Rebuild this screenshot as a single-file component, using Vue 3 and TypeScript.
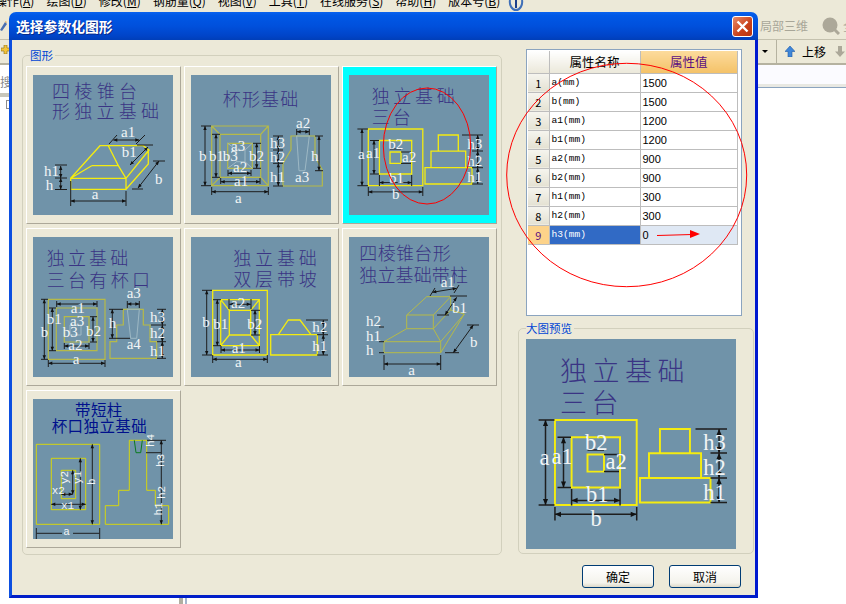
<script setup lang="ts">
type Label = [number, number, string, number?]
type Title = [number, number, number, string]
type Stroke = [string, number, string]
type Dim = [number, number, number, number]

interface Diagram {
  id: string
  titleColor?: string
  small?: boolean
  titles: Title[]
  strokes: Stroke[]
  ticks: string
  dims: Dim[]
  labels: Label[]
}

const YELLOW = '#f4ec10'
const OLIVE = '#b6ba48'
const FAINT = '#9db8c4'

const stepped: Diagram = {
  id: 'stepped',
  titles: [[22.7, 28, 83, '独立基础'], [22.7, 49, 39, '三台']],
  strokes: [
    [YELLOW, 1.3, 'M19.3 54H73.8V110.7H19.3Z M30.4 65.5H62.7V99H30.4Z M41 77H52V88.4H41Z'],
    [YELLOW, 1.3, 'M89.3 76V60H109.3V76 M82 92.5V76.2H116.7V92.5 M76 92.7H123V109H76Z'],
  ],
  ticks: 'M8.4 54H19 M8.4 110.7H19 M21 65.5H30 M21 99H30 M19.3 112V121 M73.8 112V121 M30.4 100V111 M62.7 100V111 M41 74H52 M52 77H62 M52 88.4H62 M113 60H134 M123 76H134 M123 92.7H134 M123 109H134',
  dims: [[13, 54, 13, 110.7], [25, 65.5, 25, 99], [19.3, 116.9, 73.8, 116.9], [30.4, 107.6, 62.7, 107.6], [128.7, 60, 128.7, 76], [128.7, 76, 128.7, 92.7], [128.7, 92.7, 128.7, 109]],
  labels: [[9, 84, 'a'], [17, 83.3, 'a1'], [39.3, 74, 'b2'], [53, 86.7, 'a2'], [40, 108.4, 'b1'], [43, 124.4, 'b'], [118.2, 74, 'h3'], [118.2, 90.7, 'h2'], [118.2, 107.3, 'h1']],
}

const tiles: Diagram[] = [
  {
    id: 'frustum',
    titles: [[19, 23, 85, '四棱锥台'], [19, 43, 107, '形独立基础']],
    strokes: [[YELLOW, 1.3, 'M37.7 103.3H93V114.3H37.7Z M37.7 103.3L67 70.7H110.3L116 75L93 103.3 M93 114.3L115.3 89V75 M58.7 90.7H85.3L75.3 70.7 M37.7 103.3L58.7 90.7 M85.3 90.7L93 103.3']],
    ticks: 'M37.7 106V131 M93 116V131 M76 69L84 60 M103 69L112 60 M104 70H120 M120 86H132 M99 114H110 M22 90H34 M22 103H34 M22 114.5H34',
    dims: [[37.7, 126, 93, 126], [80.3, 65, 106.3, 65], [115, 72, 97, 90], [126, 86, 105, 113], [27.7, 91, 27.7, 103], [27.7, 103, 27.7, 114.5]],
    labels: [[88, 62, 'a1'], [88.7, 81.7, 'b1'], [122, 109, 'b'], [58.7, 124, 'a'], [11, 100.7, 'h1'], [12.7, 115, 'h']],
  },
  {
    id: 'cup',
    titles: [[31.7, 31, 75.6, '杯形基础']],
    strokes: [
      [OLIVE, 1.2, 'M20.7 51H77.3V110.7H20.7Z M29 59.3H69.7V102.3H29Z M36.7 68.3H61.3V93.3H36.7Z M20.7 51L29 59.3 M77.3 51L69.7 59.3 M20.7 110.7L29 102.3 M77.3 110.7L69.7 102.3'],
      [OLIVE, 1.2, 'M100 61H124V81.7L131.3 95V111H92V88.3L100 74.7Z'],
      [FAINT, 1, 'M45.7 75H54V86.7H45.7Z M36.7 68.3L45.7 75 M61.3 68.3L54 75 M36.7 93.3L45.7 86.7 M61.3 93.3L54 86.7 M105.7 61H118.3L114 95.7H108Z'],
    ],
    ticks: 'M10 51H20 M10 110.7H20 M21 59.3H29 M21 102.3H29 M62 68.3H70 M62 93.3H70 M20.7 112V120 M77.3 112V120 M29.7 103V109 M69 103V109 M37 95V101 M60 95V101 M105.7 54V60 M118.3 54V60 M82 61H92 M82 75H92 M82 88.3H92 M82 111H92 M124 61H132 M124 95.7H132',
    dims: [[14, 51, 14, 110.7], [25, 59.3, 25, 102.3], [65.7, 68.3, 65.7, 93.3], [20.7, 116.7, 77.3, 116.7], [29.7, 106.7, 69, 106.7], [37, 98.3, 60, 98.3], [105.7, 56.7, 118.3, 56.7], [128, 61, 128, 95.7], [87.3, 61, 87.3, 75], [87.3, 75, 87.3, 88.3], [87.3, 88.3, 87.3, 111]],
    labels: [[8, 85.7, 'b'], [18, 85.7, 'b1'], [31.7, 85.7, 'b3'], [58, 85.7, 'b2'], [40, 75.7, 'a3'], [42, 97.3, 'a2'], [43, 110.7, 'a1'], [44, 128, 'a'], [105, 53.3, 'a2'], [79, 72.7, 'h3'], [79, 86.7, 'h2'], [79, 106.7, 'h1'], [120, 86, 'h'], [104, 107, 'a3']],
  },
  stepped,
  {
    id: 'steppedCup',
    titles: [[13.7, 27.5, 81.6, '独立基础'], [13.7, 49.7, 103.3, '三台有杯口']],
    strokes: [
      [OLIVE, 1.2, 'M15.3 62.3H72V122.3H15.3Z M23.3 71H64V113.7H23.3Z M31.3 79.7H56V105H31.3Z'],
      [OLIVE, 1.2, 'M90.3 72.3H110.3V88H117V104.7H123.7V121.3H77V104.7H83.7V88H90.3Z'],
      [FAINT, 1, 'M37 88H48V98H37Z M94.3 72.3H106.3L103.7 101.3H97.7Z'],
    ],
    ticks: 'M8 62.3H15 M8 122.3H15 M16 71H23 M16 113.7H23 M57 79.7H64 M57 105H64 M15.3 123V130 M72 123V130 M23.7 64V70 M64 64V70 M31.3 106V112 M56 106V112 M94.3 64V71 M106.3 64V71 M76 72.3H90 M76 101.3H97 M124 72.3H133 M118 88H133 M124 104.7H133 M124 121.3H133',
    dims: [[11.3, 62.3, 11.3, 122.3], [15.3, 126.3, 72, 126.3], [23.7, 67, 64, 67], [19.3, 71, 19.3, 113.7], [60, 79.7, 60, 105], [31.3, 109, 56, 109], [94.3, 67, 106.3, 67], [79.3, 72.3, 79.3, 101.3], [129.3, 72.3, 129.3, 88], [129.3, 88, 129.3, 104.7], [129.3, 104.7, 129.3, 121.3]],
    labels: [[7.7, 99.7, 'b'], [13.7, 87, 'b1'], [37.7, 75.7, 'a1'], [37, 88.7, 'a3'], [29.7, 100.3, 'b3'], [53, 99, 'b2'], [35.3, 113, 'a2'], [39.7, 127.3, 'a'], [93.7, 61, 'a3'], [75.7, 91.3, 'h'], [93.7, 112.3, 'a4'], [117, 85, 'h3'], [117, 101.3, 'h2'], [117, 118.7, 'h1']],
  },
  {
    id: 'doubleSlope',
    titles: [[42.3, 27.5, 83.4, '独立基础'], [42.3, 49, 83.4, '双层带坡']],
    strokes: [
      [YELLOW, 1.3, 'M21.7 53.3H76.3V118H21.7Z M29.7 62.7H68.3V108.7H29.7Z M38.3 73.3H59.7V98H38.3Z M29.7 62.7L38.3 73.3 M68.3 62.7L59.7 73.3 M29.7 108.7L38.3 98 M68.3 108.7L59.7 98'],
      [YELLOW, 1.3, 'M79.7 97.7H126.3V118H79.7Z M87.3 97.7L97.3 83H109L120 97.7'],
    ],
    ticks: 'M11 53.3H21 M11 118H21 M22 62.7H30 M22 108.7H30 M60 73.3H69 M60 98H69 M21.7 118V126 M76.3 118V126 M30 109V116 M68.5 109V116 M38 62V72 M60 62V72 M115 83H137 M126 97.7H137 M126 118H137',
    dims: [[15.7, 53.3, 15.7, 118], [26.3, 62.7, 26.3, 108.7], [64, 73.3, 64, 98], [38.3, 67.3, 59.7, 67.3], [30, 113, 68.5, 113], [21.7, 122.3, 76.3, 122.3], [132.3, 83, 132.3, 97.7], [132.3, 97.7, 132.3, 118]],
    labels: [[11.3, 90.3, 'b'], [22.3, 92, 'b1'], [40, 70.7, 'a2'], [56.3, 91.7, 'b2'], [40.7, 115.7, 'a1'], [44, 129.7, 'a'], [121.3, 94.7, 'h2'], [121.3, 114, 'h1']],
  },
  {
    id: 'frustumColumn',
    titles: [[10.3, 23, 91.4, '四棱锥台形'], [10.3, 44.7, 108.7, '独立基础带柱']],
    strokes: [[OLIVE, 1, 'M35 104.7H91.7V115.7H35Z M57.7 78H84.3V91.7H57.7Z M57.7 78L77.7 59.7H101.7L84.3 78 M101.7 59.7V73L84.3 91.7 M35 104.7L57.7 91.7 M84.3 91.7L91.7 104.7 M101.7 73L115.3 77L91.7 115.7 M115.3 77L91.7 104.7']],
    ticks: 'M35 118V133 M91.7 118V133 M81 59L86 51 M105 56L110 48 M101 59H118 M88 78H100 M118 88H130 M96 115.7H110 M30 90H35 M30 104.7H35 M30 115.7H35',
    dims: [[35, 127, 91.7, 127], [83.3, 55.3, 107.7, 51.3], [107.7, 60.3, 96, 78], [124.3, 88, 104.3, 115.7]],
    labels: [[91.7, 50.3, 'a1'], [103, 75.7, 'b1'], [121, 110.3, 'b'], [59.3, 138, 'a'], [17, 89, 'h2'], [17, 104, 'h1'], [17, 118.3, 'h']],
  },
  {
    id: 'shortColumn',
    titleColor: '#00108c',
    small: true,
    titles: [[42, 16.7, 47.3, '带短柱'], [18.7, 32.7, 95, '杯口独立基础']],
    strokes: [
      ['#d6d60e', 1, 'M3.3 45.3H66.7V125.3H3.3Z M18.3 59.3H52.7V110.7H18.3Z M28.3 71.3H42.7V99.7H28.3Z'],
      ['#d6d60e', 1, 'M96.3 41.3H113.7V91.3H122.3V106.7H135.7V125.3H72.3V106.7H85.7V91.3H96.3Z'],
      ['#0a7a20', 1, 'M101.3 41.3L103 53.7H107.7L109.3 41.3'],
    ],
    ticks: 'M3.3 129V140 M66.7 129V140 M114 41.3H133 M113 53.7H128 M3.5 134.3H29 M40 134.3H66.5',
    dims: [[59.3, 45.3, 59.3, 125.3], [47.3, 59.3, 47.3, 110.7], [39.7, 71.3, 39.7, 95.3], [18.3, 105.3, 52.7, 105.3], [28.3, 95.3, 39.7, 95.3], [128.3, 41.3, 128.3, 125.3]],
    labels: [[28, 110, 'x1'], [18.7, 94.7, 'x2'], [30.3, 135.7, 'a'], [62, 86, 'b', -90], [48, 85, 'y1', -90], [34.7, 85, 'y2', -90], [121, 48, 'h4', -90], [131, 68, 'h3', -90], [131.7, 100, 'h2', -90], [129.3, 116.5, 'h1', -90]],
  },
]

const menus: [string, string][] = [
  ['操作', 'A'], ['绘图', 'D'], ['修改', 'M'], ['钢筋量', 'Q'], ['视图', 'V'],
  ['工具', 'T'], ['在线服务', 'S'], ['帮助', 'H'], ['版本号', 'B'],
]

const rows = [
  ['a(mm)', '1500'], ['b(mm)', '1500'], ['a1(mm)', '1200'], ['b1(mm)', '1200'], ['a2(mm)', '900'],
  ['b2(mm)', '900'], ['h1(mm)', '300'], ['h2(mm)', '300'], ['h3(mm)', '0'],
]

const dimLine = (d: Dim) => `M${d[0]} ${d[1]}L${d[2]} ${d[3]}`

// filled arrow heads on both ends of a dimension line
const dimHeads = (d: Dim) => {
  const len = Math.hypot(d[2] - d[0], d[3] - d[1]) || 1
  const ux = (d[2] - d[0]) / len
  const uy = (d[3] - d[1]) / len
  const size = Math.min(4, len / 2.5)
  const head = (x: number, y: number, dir: number) => {
    const bx = x + ux * size * dir
    const by = y + uy * size * dir
    return `M${x} ${y}L${bx - uy * 1.7} ${by + ux * 1.7}L${bx + uy * 1.7} ${by - ux * 1.7}Z`
  }
  return head(d[0], d[1], 1) + head(d[2], d[3], -1)
}

const labelTransform = (l: Label) => (l[3] ? `rotate(${l[3]} ${l[0]} ${l[1]})` : undefined)
</script>

<template>
  <div class="desk">
    <!-- main application behind the dialog -->
    <div class="menubar">
      <div class="menubar-inner">
        <span v-for="m in menus" :key="m[0]">{{ m[0] }}(<u>{{ m[1] }}</u>)</span>
        <svg class="menu-icon" width="16" height="11" viewBox="0 0 16 11">
          <path d="M2 0C1 5 4 10 8 10S15 5 14 0" fill="none" stroke="#3f6fb8" stroke-width="2" />
          <path d="M8 0V8" stroke="#1c3f8a" stroke-width="2" />
        </svg>
      </div>
    </div>
    <div class="toolbar toolbar-top">
      <div class="tool-left">
        <svg class="pencil" width="7" height="10" viewBox="0 0 7 10">
          <path d="M0 9L5 1L7 3L2 10Z" fill="#4a6fb0" />
          <path d="M5 1L6 0L7 2Z" fill="#e3a23c" />
        </svg>
      </div>
      <span class="tool-grey">局部三维</span>
      <i class="tool-sep"></i>
      <svg class="tool-search" width="18" height="18" viewBox="0 0 18 18">
        <circle cx="8" cy="8" r="7.5" fill="#aca899" />
        <path d="M12 12L17 17" stroke="#aca899" stroke-width="3" />
      </svg>
      <span class="tool-grey">全屏</span>
    </div>
    <div class="toolbar toolbar-second">
      <div class="tool-left">
        <svg class="plus" width="9" height="9" viewBox="0 0 9 9">
          <path d="M3 0H6V3H9V6H6V9H3V6H0V3H3Z" fill="#f2c53d" stroke="#8a6d14" stroke-width="0.6" />
        </svg>
      </div>
      <i class="caret"></i>
      <i class="tool-sep second-sep"></i>
      <svg class="move-icon" width="10" height="11" viewBox="0 0 10 11">
        <path d="M5 0L10 5.5H7V11H3V5.5H0Z" fill="#3f86d8" stroke="#1f5aa8" stroke-width="0.6" />
      </svg>
      <span class="tool-text">上移</span>
      <svg class="move-icon down" width="10" height="11" viewBox="0 0 10 11">
        <path d="M5 11L10 5.5H7V0H3V5.5H0Z" fill="#aca899" />
      </svg>
    </div>
    <div class="workspace">
      <div class="side-pane">
        <div class="search-box">搜索</div>
        <div class="search-line"></div>
        <div class="tree-box"></div>
      </div>
      <div class="splitter"></div>
      <div class="main-pane">
        <div class="main-head"></div>
      </div>
    </div>

    <!-- dialog window -->
    <div class="dialog">
      <div class="titlebar">
        <span class="title-text">选择参数化图形</span>
        <button class="close-btn" type="button" aria-label="关闭">
          <svg width="13" height="13" viewBox="0 0 13 13">
            <path d="M1.5 1.5L11.5 11.5M11.5 1.5L1.5 11.5" stroke="#fff" stroke-width="2.4" />
          </svg>
        </button>
      </div>
      <div class="client">
        <section class="group shapes">
          <span class="group-label">图形</span>
          <div class="tile-grid">
            <div v-for="d in tiles" :key="d.id" class="tile" :class="{ 'tile--on': d.id === 'stepped' }">
              <svg class="drawing" width="140" height="140" viewBox="0 0 140 140">
                <rect width="140" height="140" fill="#7093a9" />
                <text v-for="t in d.titles" :key="t[3]" class="d-title" :class="{ 'd-title--small': d.small }" :x="t[0]" :y="t[1]" :textLength="t[2]" :fill="d.titleColor || '#3a3484'">{{ t[3] }}</text>
                <path v-for="(s, i) in d.strokes" :key="i" :d="s[2]" :stroke="s[0]" :stroke-width="s[1]" fill="none" />
                <path :d="d.ticks" stroke="#1e1e1e" stroke-width="1" fill="none" />
                <template v-for="(m, i) in d.dims" :key="i">
                  <path :d="dimLine(m)" stroke="#1e1e1e" stroke-width="1" />
                  <path :d="dimHeads(m)" fill="#111" />
                </template>
                <text v-for="(l, i) in d.labels" :key="i" class="d-label" :class="{ 'd-label--small': d.small }" :x="l[0]" :y="l[1]" :transform="labelTransform(l)">{{ l[2] }}</text>
              </svg>
            </div>
          </div>
        </section>

        <div class="side">
          <div class="grid-wrap">
            <table class="props">
              <thead>
                <tr>
                  <th class="num"></th>
                  <th class="name">属性名称</th>
                  <th class="val val--active">属性值</th>
                </tr>
              </thead>
              <tbody>
                <tr v-for="(r, i) in rows" :key="r[0]" :class="{ selected: i === rows.length - 1 }">
                  <td class="num">{{ i + 1 }}</td>
                  <td class="name">{{ r[0] }}</td>
                  <td class="val">{{ r[1] }}</td>
                </tr>
              </tbody>
            </table>
          </div>

          <section class="group preview">
            <span class="group-label">大图预览</span>
            <svg class="drawing" width="210" height="210" viewBox="0 0 140 140">
              <rect width="140" height="140" fill="#7093a9" />
              <text v-for="t in stepped.titles" :key="t[3]" class="d-title" :x="t[0]" :y="t[1]" :textLength="t[2]" fill="#3a3484">{{ t[3] }}</text>
              <path v-for="(s, i) in stepped.strokes" :key="i" :d="s[2]" :stroke="s[0]" :stroke-width="s[1]" fill="none" />
              <path :d="stepped.ticks" stroke="#1e1e1e" stroke-width="1" fill="none" />
              <template v-for="(m, i) in stepped.dims" :key="i">
                <path :d="dimLine(m)" stroke="#1e1e1e" stroke-width="1" />
                <path :d="dimHeads(m)" fill="#111" />
              </template>
              <text v-for="(l, i) in stepped.labels" :key="i" class="d-label" :x="l[0]" :y="l[1]">{{ l[2] }}</text>
            </svg>
          </section>

          <div class="actions">
            <button class="xp-btn" type="button">确定</button>
            <button class="xp-btn" type="button">取消</button>
          </div>
        </div>
      </div>
    </div>

    <!-- red marks drawn over the screenshot -->
    <svg class="marks" width="846" height="604" viewBox="0 0 846 604">
      <ellipse cx="427" cy="146" rx="43.7" ry="58" fill="none" stroke="#f00" />
      <ellipse cx="626.7" cy="175" rx="120" ry="111.7" fill="none" stroke="#f00" />
      <path d="M657 235.5L692 234.5" stroke="#f00" />
      <path d="M690 230L700 234L690 238Z" fill="#f00" />
    </svg>
  </div>
</template>

<style scoped>
.desk {
  position: relative;
  width: 846px;
  height: 604px;
  overflow: hidden;
  background: #fff;
  font-family: "Noto Sans CJK SC", "Liberation Sans", sans-serif;
  display: flex;
  flex-direction: column;
}

/* ── background application ──────────────────────────────────────────────── */
.menubar {
  height: 12px;
  flex-shrink: 0;
  overflow: hidden;
  background: #ece9d8;
}

.menubar-inner {
  display: flex;
  align-items: flex-start;
  gap: 12px;
  margin: -7px 0 0 -5px;
  font-size: 12px;
  line-height: 16px;
  color: #000;
  white-space: nowrap;
}

.menu-icon {
  margin: 7px 0 0 -4px;
}

.toolbar {
  display: flex;
  align-items: center;
  flex-shrink: 0;
  background: #ece9d8;
  white-space: nowrap;
  overflow: hidden;
}

.toolbar-top {
  height: 28px;
  border-bottom: 1px solid #c4c1ae;
  box-sizing: border-box;
}

.toolbar-second {
  height: 25px;
  border-bottom: 2px solid #b5b2a0;
  box-sizing: border-box;
}

.tool-left {
  width: 760px;
  flex-shrink: 0;
}

.pencil {
  display: block;
}

.plus {
  display: block;
  margin: -5px 0 0 1px;
}

.tool-grey {
  font-size: 12px;
  color: #a8a698;
}

.tool-sep {
  width: 1px;
  height: 24px;
  margin: 0 7px;
  background: #b5b2a0;
}

.tool-search {
  margin-right: 3px;
  flex-shrink: 0;
}

.caret {
  width: 0;
  height: 0;
  margin-left: 2px;
  border-left: 3px solid transparent;
  border-right: 3px solid transparent;
  border-top: 3px solid #000;
}

.second-sep {
  margin: 0 8px;
}

.move-icon {
  flex-shrink: 0;
}

.move-icon.down {
  margin-left: 9px;
}

.tool-text {
  margin-left: 7px;
  font-size: 12px;
  color: #000;
}

.workspace {
  flex: 1;
  display: flex;
  min-height: 0;
}

.side-pane {
  width: 179px;
  padding-top: 5px;
  flex-shrink: 0;
}

.search-box {
  height: 23px;
  font-size: 12px;
  line-height: 23px;
  color: #8a8a8a;
}

.search-line {
  height: 4px;
  background: #c8c6ba;
}

.tree-box {
  width: 9px;
  height: 9px;
  margin: 3px 0 0 6px;
  box-sizing: border-box;
  border: 1px solid #8c8c8c;
}

.splitter {
  width: 9px;
  flex-shrink: 0;
  background: linear-gradient(90deg, #b0aea0 0 4px, #fff 4px 6px, #a4b4cc 6px 8px, #fff 8px);
}

.main-pane {
  flex: 1;
  min-width: 0;
}

.main-head {
  height: 23px;
  box-sizing: border-box;
  background: linear-gradient(#fbfbff 0 19px, #e8e8e2 19px);
  border-bottom: 1px solid #8ba4bf;
}

/* ── dialog ──────────────────────────────────────────────────────────────── */
.dialog {
  position: absolute;
  left: 9px;
  top: 12px;
  width: 749px;
  height: 586px;
  display: flex;
  flex-direction: column;
  border-radius: 7px 7px 0 0;
  overflow: hidden;
}

.titlebar {
  height: 28px;
  flex-shrink: 0;
  display: flex;
  align-items: center;
  justify-content: space-between;
  padding: 0 5px 0 7px;
  background: linear-gradient(#0a62ee 0, #0058e6 12%, #0050dc 50%, #0044c8 85%, #003eb8 100%);
}

.title-text {
  font-size: 13.8px;
  font-weight: 700;
  color: #fff;
  text-shadow: 1px 1px 0 #0a2a8a;
}

.close-btn {
  width: 21px;
  height: 21px;
  padding: 0;
  display: flex;
  align-items: center;
  justify-content: center;
  border: 1px solid #fff;
  border-radius: 3px;
  background: linear-gradient(135deg, #e88a68, #c8401a 60%, #b8340f);
}

.client {
  flex: 1;
  min-height: 0;
  display: flex;
  align-items: flex-start;
  gap: 16px;
  padding: 9px 1px 0 10px;
  background: #ece9d8;
  border-left: 3px solid #0c4fe0;
  border-right: 3px solid #0019cf;
  border-bottom: 3px solid #001ec8;
}

.group {
  position: relative;
  box-sizing: border-box;
  border: 1px solid #d2d0bd;
  border-radius: 5px;
}

.group-label {
  position: absolute;
  left: 7px;
  top: -7px;
  padding-right: 2px;
  background: #ece9d8;
  font-size: 11.5px;
  line-height: 13px;
  color: #0046d5;
}

.shapes {
  width: 480px;
  height: 500px;
  margin-top: 6px;
  padding: 10px 0 0 3px;
}

.tile-grid {
  display: grid;
  grid-template-columns: repeat(3, 155px);
  grid-auto-rows: 158px;
  gap: 4px 3px;
}

.tile {
  box-sizing: border-box;
  padding: 8px 0 0 6px;
  border: 1px solid;
  border-color: #fff #aca899 #aca899 #fff;
}

.tile--on {
  background: #00ffff;
}

.drawing {
  display: block;
}

.d-title {
  font-size: 18px;
  font-family: "Noto Sans CJK SC", sans-serif;
  font-weight: 300;
}

.d-title--small {
  font-size: 15.5px;
  font-weight: 400;
}

.d-label {
  font-family: "Liberation Serif", serif;
  font-size: 15px;
  fill: #f2f5f6;
}

.d-label--small {
  font-family: "Liberation Mono", monospace;
  font-size: 11px;
}

.side {
  width: 236px;
  flex-shrink: 0;
}

.grid-wrap {
  box-sizing: border-box;
  width: 216px;
  height: 267px;
  margin-left: 8px;
  padding: 1px 3px 0 1px;
  background: #fff;
  border: 1px solid #8ba4bf;
}

.props {
  width: 100%;
  border-collapse: collapse;
  table-layout: fixed;
}

.props th,
.props td {
  padding: 0;
  border: 1px solid #bdbdbd;
  box-sizing: border-box;
  height: 19px;
  overflow: hidden;
  white-space: nowrap;
}

.props thead th {
  border-top: none;
  height: 22px;
  font-size: 12.5px;
  font-weight: 400;
  color: #000;
  background: linear-gradient(#fff, #ebe8da);
}

.props tr > :first-child {
  border-left: none;
}

.props .num {
  width: 21px;
}

.props .name {
  width: 91px;
}

.props thead .val--active {
  color: #5b0f80;
  background: linear-gradient(#fcdb9c, #f4c268);
}

.props td.num {
  text-align: center;
  font-size: 11px;
  background: linear-gradient(#f6f5ef, #e4e1d2);
}

.props td.name {
  padding-left: 2px;
  font-family: "Liberation Mono", monospace;
  font-size: 9.6px;
}

.props td.val {
  padding-left: 2px;
  font-family: "Liberation Sans", sans-serif;
  font-size: 11px;
}

.selected td.num {
  background: #fdd38a;
  color: #5b0f80;
}

.selected td.name {
  background: #316ac5;
  color: #fff;
}

.selected td.val {
  background: #dfe8f4;
}

.preview {
  height: 226px;
  margin-top: 12px;
  padding: 10px 0 0 7px;
}

.actions {
  display: flex;
  justify-content: flex-end;
  gap: 15px;
  margin-top: 11px;
  padding-right: 13px;
}

.xp-btn {
  width: 72px;
  height: 23px;
  padding: 0;
  font-family: inherit;
  font-size: 12px;
  color: #000;
  border: 1px solid #003c74;
  border-radius: 3px;
  background: linear-gradient(#fff, #f4f3ec 80%, #dcd8c8);
}

.marks {
  position: absolute;
  left: 0;
  top: 0;
  pointer-events: none;
}
</style>

<style>
html,
body {
  margin: 0;
  background: #fff;
  overflow: hidden;
}
</style>
